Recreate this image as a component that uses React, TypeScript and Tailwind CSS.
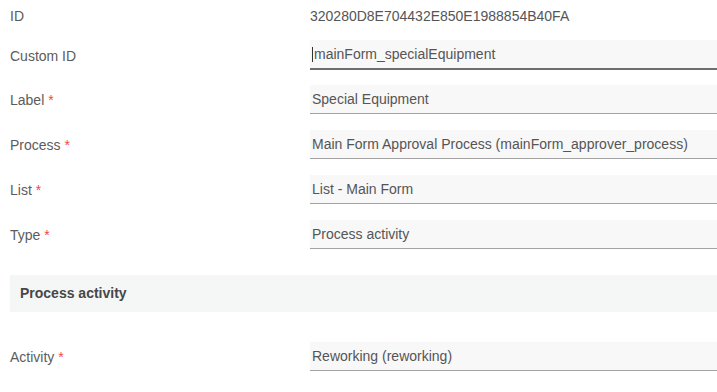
const fields = [
  { label: 'Label', required: true, value: 'Special Equipment' },
  { label: 'Process', required: true, value: 'Main Form Approval Process (mainForm_approver_process)' },
  { label: 'List', required: true, value: 'List - Main Form' },
  { label: 'Type', required: true, value: 'Process activity' },
];

function FieldLabel({ text, required }: { text: string; required?: boolean }) {
  return (
    <div className="flex w-[300px] shrink-0 items-center pt-[2px] text-[14px] text-[#5c5c5c]">
      {text}
      {required && <span className="ml-[4px] text-[#f04848]">*</span>}
    </div>
  );
}

function Row({ label, required, value }: { label: string; required?: boolean; value: string }) {
  return (
    <div className="mb-[16px] flex h-[29px]">
      <FieldLabel text={label} required={required} />
      <div className="flex flex-1 items-center border-b border-[#a3a3a3] bg-[#f8f8f8] pt-[1px] pl-[2px] text-[14px] text-[#555]">
        {value}
      </div>
    </div>
  );
}

export default function App() {
  return (
    <div className="h-[392px] w-[717px] overflow-hidden bg-white pl-[10px] font-['Liberation_Sans',Arial,sans-serif]">
      <div className="flex h-[32px] items-center">
        <div className="w-[300px] shrink-0 text-[14px] text-[#5c5c5c]">ID</div>
        <div className="text-[14px] text-[#555]">320280D8E704432E850E1988854B40FA</div>
      </div>

      <div className="mt-[8px] mb-[15px] flex h-[30px]">
        <div className="flex w-[300px] shrink-0 items-center pt-[3px] text-[14px] text-[#5c5c5c]">Custom ID</div>
        <div className="flex flex-1 items-center border-b-2 border-[#6e6e6e] bg-[#f8f8f8] pl-[2px] text-[14px] text-[#555]">
          <span className="mr-[1px] h-[15px] w-px bg-[#333]" />
          mainForm_specialEquipment
        </div>
      </div>

      {fields.map((f) => (
        <Row key={f.label} {...f} />
      ))}

      <div className="mt-[26px] flex h-[37px] items-center bg-[#f5f7f7] pl-[10px] text-[14px] font-bold text-[#474747]">
        Process activity
      </div>

      <div className="mt-[30px]">
        <Row label="Activity" required value="Reworking (reworking)" />
      </div>
    </div>
  );
}
